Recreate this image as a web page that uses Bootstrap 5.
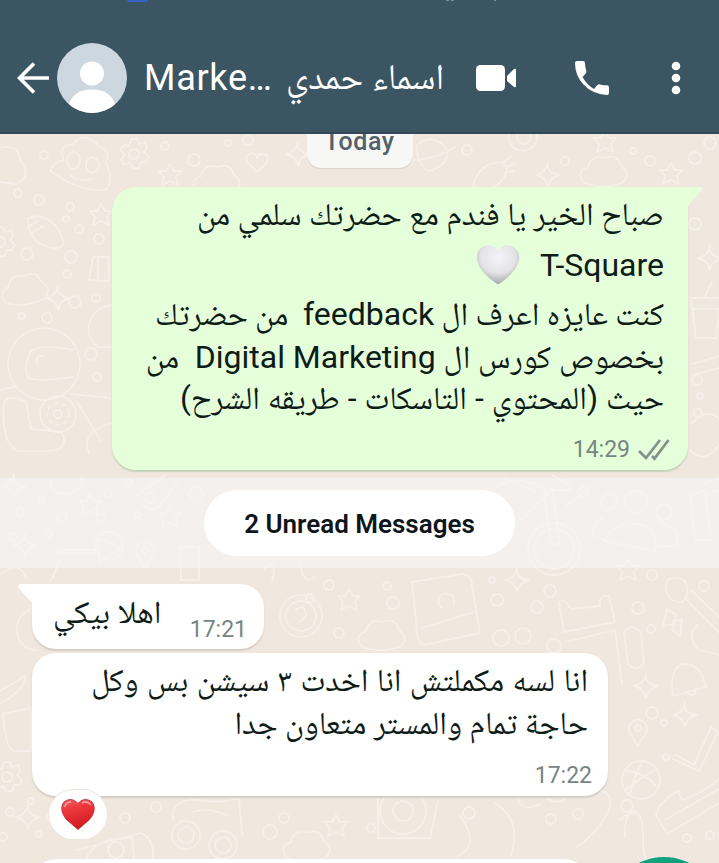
<!DOCTYPE html>
<html lang="en">
<head>
<meta charset="utf-8">
<meta name="viewport" content="width=device-width, initial-scale=1">
<title>Chat</title>
<link href="https://cdn.jsdelivr.net/npm/bootstrap@5.3.0/dist/css/bootstrap.min.css" rel="stylesheet">
<style>
body{width:719px;height:863px;overflow:hidden;background:#f0e7df;font-family:Roboto,"Noto Naskh Arabic","DejaVu Sans",sans-serif;color:#0e1b17}
svg{display:block;flex:none}
.topbar{height:134px;background:#3b5563;border-bottom:2px solid #31495a;padding:24px 38px 0 17px;z-index:3}
.contact{font-size:36px;color:#fff;line-height:50px;white-space:nowrap}
.contact-en{letter-spacing:.7px;width:143px;padding-left:1px}
.contact-ar{margin-top:-1px}
.phone{margin-left:58px}
.kebab{margin-left:61px}
.wallpaper{left:0;top:134px;z-index:0;fill:none;stroke:#f7f0ea;stroke-width:1.8;stroke-linejoin:round;stroke-linecap:round}
.chat{z-index:1;height:729px;overflow:hidden}
.day{width:106px;height:54px;margin-top:-20px;border-radius:14px;background:#f7f7f5;color:#52616a;font-size:25px;font-weight:500;letter-spacing:.6px;line-height:56px;box-shadow:0 1px 1px #d9d0c8}
.bubble{border-radius:24px;box-shadow:0 1.5px 1.5px #d3cdc4}
.bubble-out{width:576px;height:283px;margin:19px 31px 0 auto;padding:6px 24px 0 0;background:#e5ffdb;box-shadow:0 1.5px 1.5px #c3d2b4}
.tail{top:0}
.tail-out{right:-15px}
.tail-in{left:-14px}
.txt{font-size:32px;white-space:pre}
.l1{line-height:42px;word-spacing:-.6px}
.l2{line-height:60px}
.l3{line-height:38px;word-spacing:-.6px}
.l4{line-height:48px;word-spacing:-.1px}
.l5{line-height:34px}
.l6{line-height:43px}
.wide{word-spacing:.5px}
.tight{word-spacing:-.5px}
.wheart{margin-right:20px}
.out-meta{margin:20px -6px 0 0}
.in-stamp{margin:16px -4px 0 0}
.stamp{font-size:23px;line-height:30px;color:#76857f}
.unread{height:90px;margin-top:8px;background:rgba(246,246,245,.62)}
.unread-pill{width:311px;height:66px;padding-top:2px;background:#fff;border-radius:33px;font-size:26px;font-weight:600;color:#0f161b;white-space:nowrap}
.in-1{width:232px;height:65px;margin:16px 0 0 32px;padding:0 17px 0 21px;background:#fff}
.in-2{width:576px;height:143px;margin:4px 0 0 32px;padding:6px 20px 0 0;background:#fff}
.in-3{width:556px;height:60px;margin:63px 0 0 32px;background:#fff}
.reaction{left:17px;top:137px;width:58px;height:49px;border-radius:25px;background:#fff;box-shadow:0 0 0 1px #ece6e0}
.fab{left:608px;top:723px;width:112px;height:112px;background:#12a17e}
</style>
</head>
<body class="position-relative">
<svg class="wallpaper position-absolute" width="719" height="729" viewBox="0 134 719 729" aria-hidden="true">
<defs>
<path id="star" d="M0-11 4-4 11-4 6 2 8 10 0 6-8 10-6 2-11-4-4-4Z"/>
<path id="spark" d="M0-12Q-2-2 12 0 2 2 0 12-2 2-12 0-2-2 0-12Z"/>
<path id="cloud" d="M-19 12Q-28 1-15-4-12-17 2-13 14-18 18-5 29 3 19 12Q0 19-19 12Z"/>
<path id="gear" d="M-3-15H3L5-10 11-12 13-6 10-2 15 3 12 8 7 8 5 14-1 14-4 9-10 11-13 6-9 1-14-4-10-9-5-8ZM5 0A5 5 0 1 1-5 0 5 5 0 1 1 5 0"/>
<path id="rocket" d="M-24 10Q-18-14 6-14 13-5 6 3-5 18-24 10ZM6-14 14-20M9-9 18-12M8-3 17-5"/>
<path id="heart" d="M0 9-10-1Q-12-9-5-10 0-9 0-5 2-11 8-9 13-5 9 1Z"/>
<path id="pin" d="M0 15-8 2A9 9 0 1 1 8 2ZM3-3A3 3 0 1 1-3-3 3 3 0 1 1 3-3"/>
<path id="bell" d="M-16 16Q-20-14-5-16 12-16 17 7ZM-2 13Q6 18 7 9"/>
<path id="bolt" d="M-6-15 3-9 1-2 9-5 7 12-1 6 2 0-10 2Z"/>
<g id="bubbles"><circle r="4"/><circle cx="21" cy="-11" r="3"/><circle cx="42" cy="5" r="5"/><circle cx="29" cy="22" r="3"/><circle cx="-7" cy="25" r="4"/></g>
<path id="book" d="M-32-26 18-34Q28-33 28-22L36 25-20 37Q-27 34-27 24ZM-22 20 30 4M-2 0A8 8 0 1 1 10-4"/>
<path id="cup" d="M-15-20H15L10 20H-10ZM-13-9H13M-2-20 6-36"/>
</defs>
<path d="M0 148Q19 143 20 160 33 177 16 184L0 182M50 171Q56 159 64 161 58 144 72 145 84 130 99 146 112 151 106 163 114 180 106 190 79 192 50 171M67 161A6 8 0 1 0 80 160 6 8 0 1 0 67 161M86 165A6 7 0 1 0 99 165 6 7 0 1 0 86 165M71 176Q83 183 91 179"/>
<circle cx="44" cy="155" r="4"/><circle cx="18" cy="193" r="4"/><circle cx="39" cy="200" r="5"/><circle cx="70" cy="207" r="4"/><circle cx="27" cy="254" r="6"/><circle cx="71" cy="257" r="6"/><circle cx="67" cy="274" r="4"/><circle cx="75" cy="302" r="6"/><circle cx="96" cy="298" r="4"/><circle cx="47" cy="318" r="5"/><circle cx="91" cy="354" r="6"/><circle cx="97" cy="377" r="4"/><circle cx="99" cy="239" r="5"/><circle cx="22" cy="316" r="3"/><circle cx="66" cy="219" r="3"/><circle cx="79" cy="229" r="4"/>
<use href="#star" x="101" y="215"/><use href="#gear" x="0" y="242"/>
<path d="M27 219Q42 211 56 226 71 248 55 248 36 247 30 231ZM28 227 38 221M30 234 43 226"/>
<use href="#cloud" x="24" y="289" transform="rotate(-8 24 289)"/><use href="#spark" x="58" y="298"/>
<path d="M89 280 93 257H109V281ZM98 258V278M112 305Q99 306 91 318 84 336 98 347H112"/>
<circle cx="44" cy="364" r="36"/><path d="M73 350Q39 343 30 352 22 370 29 378 41 382 73 377M37 365Q35 354 44 356"/>
<circle cx="58" cy="414" r="18"/><circle cx="58" cy="414" r="4"/><circle cx="58" cy="414" r="11" stroke-dasharray="3 5"/>
<path d="M4 403Q8 393 26 402L31 429 62 432Q70 451 48 451H17Q1 442 4 403M71 394 110 398M77 402 101 441M0 390 18 386M112 423Q80 432 89 453"/>
<use href="#gear" x="134" y="154"/><use href="#cloud" x="216" y="180"/><use href="#star" x="170" y="175"/><use href="#heart" x="257" y="163"/><use href="#spark" x="298" y="154"/><circle cx="194" cy="160" r="6"/><circle cx="165" cy="146" r="4"/><circle cx="248" cy="140" r="5"/><circle cx="228" cy="143" r="3"/>
<path d="M417 145Q433 132 446 148 451 165 429 171 416 164 417 145M408 160Q434 161 455 147"/>
<circle cx="523" cy="137" r="14"/><circle cx="524" cy="137" r="7"/><use href="#rocket" x="497" y="176"/><use href="#spark" x="548" y="175"/><use href="#star" x="605" y="142"/><use href="#cloud" x="603" y="171"/><use href="#star" x="671" y="174"/><circle cx="650" cy="161" r="5"/><circle cx="695" cy="158" r="6"/><circle cx="710" cy="143" r="6"/><circle cx="565" cy="161" r="4"/><circle cx="467" cy="150" r="5"/><circle cx="633" cy="151" r="3"/>
<circle cx="695" cy="224" r="6"/><use href="#spark" x="710" y="258"/><use href="#cup" x="706" y="318"/><path d="M692 364 719 356M692 375 719 368M692 423Q707 407 719 419M690 450Q705 465 719 445"/><circle cx="697" cy="380" r="5"/><circle cx="700" cy="396" r="3"/><circle cx="698" cy="413" r="4"/>
<use href="#spark" x="14" y="486"/><path d="M50 482Q52 495 69 494 84 488 82 477M136 496 165 475M142 503Q152 515 161 504L178 482M59 550H98V538L122 548 99 562V553H59Z"/><circle cx="109" cy="546" r="14"/>
<use href="#star" x="90" y="505"/><use href="#star" x="170" y="517"/><use href="#spark" x="25" y="545"/><use href="#pin" x="145" y="553"/><use href="#bubbles" x="20" y="512"/><use href="#bubbles" x="108" y="493"/><circle cx="196" cy="494" r="7"/><path d="M0 575Q19 559 26 578M60 560 51 581M180 547H199V580H181ZM264 569Q278 556 272 582M300 563Q304 588 315 576"/>
<path d="M494 488Q522 471 549 493L520 521M505 478 535 491M552 475 570 485V490H550"/><circle cx="554" cy="549" r="26"/><circle cx="554" cy="549" r="20"/><path d="M544 490 551 545 560 543 552 488M565 507 592 486"/>
<circle cx="583" cy="492" r="5"/><circle cx="609" cy="502" r="8"/><circle cx="636" cy="502" r="11"/><circle cx="664" cy="512" r="8"/><path d="M604 541Q616 520 637 524 656 524 656 551ZM604 517Q594 523 592 535L603 539M658 520 677 532V546H659M690 495 705 490 711 540H695ZM705 484 719 478M707 494 719 490"/>
<use href="#book" x="444" y="608"/><use href="#cloud" x="381" y="635"/><use href="#spark" x="517" y="580"/><circle cx="550" cy="591" r="6"/><circle cx="497" cy="600" r="6"/><circle cx="537" cy="607" r="6"/><circle cx="393" cy="603" r="6"/><circle cx="387" cy="586" r="4"/><circle cx="492" cy="580" r="3"/>
<path d="M559 603Q563 596 571 609L600 606Q599 594 609 596L615 622 564 632ZM566 642 615 630 622 684M624 632Q632 622 641 633L644 663Q637 673 628 664Z"/><circle cx="638" cy="608" r="6"/><circle cx="554" cy="646" r="7"/><circle cx="501" cy="638" r="8"/><circle cx="523" cy="636" r="8"/>
<use href="#star" x="628" y="570"/><circle cx="652" cy="575" r="5"/><circle cx="651" cy="629" r="4"/><path d="M666 585Q668 574 684 580 692 593 682 602 665 602 666 585M685 598 719 632M691 590 719 617M697 625Q686 638 699 650L719 655"/><use href="#bolt" x="673" y="624"/><circle cx="704" cy="586" r="5"/>
<use href="#bell" x="689" y="680"/><use href="#spark" x="646" y="686"/><use href="#spark" x="685" y="715"/><use href="#pin" x="638" y="731"/><circle cx="652" cy="713" r="6"/><circle cx="664" cy="723" r="3"/><circle cx="666" cy="757" r="3"/>
<path d="M676 755 694 765 711 727 718 732 699 771 673 759M678 791Q657 804 656 815L667 834 719 803M678 791 682 800Q701 794 719 779M665 820 719 789"/><circle cx="641" cy="780" r="19"/><path d="M625 770Q646 773 658 788M643 761Q633 777 630 795M625 790Q642 777 657 769"/><circle cx="627" cy="806" r="6"/>
<path d="M599 790Q617 794 606 816 595 835 577 847M620 820Q643 799 643 836T654 857M625 837Q624 810 636 811"/>
<use href="#star" x="349" y="600"/><circle cx="301" cy="616" r="21"/><circle cx="301" cy="616" r="15"/><path d="M296 610Q305 603 306 615L300 622"/><circle cx="329" cy="585" r="5"/><circle cx="310" cy="598" r="4"/><circle cx="339" cy="633" r="5"/><path d="M32 608Q13 617 18 637 23 650 36 650"/>
<path d="M0 691 25 676Q26 689 0 704M3 714 31 708V751H14Q6 750 3 714"/><use href="#gear" x="7" y="777"/><use href="#spark" x="28" y="817"/><use href="#bubbles" x="10" y="812"/><circle cx="125" cy="818" r="5"/><circle cx="156" cy="807" r="5"/>
<path d="M173 819Q171 799 197 800 221 804 239 798L242 834M192 812Q210 807 227 815M77 850 140 833Q154 837 153 858M85 863Q90 843 112 840L132 837 134 858"/><circle cx="186" cy="835" r="14"/><circle cx="186" cy="835" r="8"/><circle cx="223" cy="845" r="14"/><circle cx="223" cy="845" r="8"/><circle cx="116" cy="850" r="8"/>
<use href="#star" x="336" y="826"/><use href="#cloud" x="306" y="846"/><circle cx="270" cy="832" r="7"/><circle cx="284" cy="818" r="5"/><circle cx="403" cy="811" r="23"/><circle cx="403" cy="811" r="10"/><path d="M378 797V838H430L438 801M456 857Q482 846 460 816M495 803Q522 819 511 855"/><circle cx="469" cy="813" r="6"/><circle cx="371" cy="828" r="4"/><path d="M517 798Q523 813 540 804M547 798Q558 806 566 797"/><circle cx="551" cy="819" r="5"/><circle cx="578" cy="814" r="5"/><circle cx="687" cy="838" r="4"/><circle cx="710" cy="835" r="4"/>
</svg>

<nav class="topbar position-relative d-flex align-items-center">
  <svg class="position-absolute top-0 start-0" width="719" height="4" aria-hidden="true"><rect x="127" y="-4" width="21" height="6" rx="2" fill="#3962c8"/><path d="M446 0h3M451 0h3M494 0h2" stroke="#b8c6cd"/></svg>
  <svg width="32" height="34" viewBox="0 0 32 34" fill="none" stroke="#fff" stroke-width="3.7"><path d="M32 17H3M17 2.500 2.500 17 17 31.500"/></svg>
  <svg class="ms-2" width="70" height="70" viewBox="0 0 70 70"><defs><clipPath id="face"><circle cx="35" cy="35" r="35"/></clipPath></defs><circle cx="35" cy="35" r="35" fill="#cdd7e0"/><g fill="#fff" clip-path="url(#face)"><circle cx="35" cy="30.500" r="12"/><path d="M12 61Q17 46.500 35 46.500T58 61V72H12Z"/></g></svg>
  <div class="contact d-flex ms-3"><span class="contact-en">Marke…</span><span class="contact-ar" dir="rtl">اسماء حمدي</span></div>
  <div class="d-flex align-items-center ms-auto">
    <svg width="40" height="28" viewBox="0 0 40 28" fill="#fff"><rect y="1" width="29" height="26" rx="4.500"/><path d="M31 12 38 5Q40 4 40 6V22Q40 24 38 23L31 17Z"/></svg>
    <svg class="phone" width="36" height="36" viewBox="0 0 36 36" fill="#fff"><path d="M3 1H9Q11 1 11 3 11 7 12.300 11 12.700 12.500 11.500 13.700L8.500 17Q13 25 20 29L23.200 25.200Q24.300 24 26 24.400 29 25.200 33 25.300 35 25.400 35 27.500V33Q35 35 33 35 18 34 9.500 24.500 1 15.500 1 3 1 1 3 1Z"/></svg>
    <svg class="kebab" width="10" height="34" viewBox="0 0 10 34" fill="#fff"><circle cx="5" cy="5" r="4.300"/><circle cx="5" cy="17" r="4.300"/><circle cx="5" cy="29" r="4.300"/></svg>
  </div>
</nav>

<main class="chat position-relative d-flex flex-column">
  <div class="day text-center mx-auto flex-shrink-0">Today</div>

  <section class="bubble bubble-out position-relative flex-shrink-0">
    <svg class="tail tail-out position-absolute" width="40" height="28" viewBox="0 0 40 28"><path d="M0 0H37Q41 1 38 4L25 19V28H0Z" fill="#e5ffdb"/></svg>
    <div class="position-relative" dir="rtl">
      <div class="txt l1">صباح الخير يا فندم مع حضرتك سلمي من</div>
      <div class="txt l2 d-flex align-items-center"><span>T-Square</span><svg class="wheart" width="44" height="40" viewBox="0 0 44 40"><defs><radialGradient id="wh" cx=".5" cy=".3" r=".68"><stop offset="0" stop-color="#f4f4f6"/><stop offset=".6" stop-color="#e4e4e7"/><stop offset="1" stop-color="#a9aaae"/></radialGradient></defs><path d="M22 5C27-1 35-1 40 4 46 11 43 20 36 28Q30 35 22 39.500 14 35 8 28C1 20-2 11 4 4 9-1 17-1 22 5Z" fill="url(#wh)"/></svg></div>
      <div class="txt l3">كنت عايزه اعرف ال feedback  من حضرتك</div>
      <div class="txt l4">بخصوص كورس ال Digital Marketing  من</div>
      <div class="txt l5">حيث (المحتوي - التاسكات - طريقه الشرح)</div>
    </div>
    <div class="out-meta d-flex justify-content-end align-items-center position-relative"><span class="stamp">14:29</span><svg class="ms-2" width="32" height="22" viewBox="0 0 32 22" fill="none" stroke="#84928c" stroke-width="2.800"><path d="M1 12 8 19 22 1M14 17 16.500 19.500 30.500 1"/></svg></div>
  </section>

  <section class="unread d-flex justify-content-center align-items-center flex-shrink-0"><div class="unread-pill d-flex justify-content-center align-items-center">2 Unread Messages</div></section>

  <section class="bubble in-1 position-relative d-flex justify-content-between flex-shrink-0">
    <svg class="tail tail-in position-absolute" width="40" height="28" viewBox="0 0 40 28"><path d="M40 0H2Q-1 1 1 4 8 13 14 18V28H40Z" fill="#fff"/></svg>
    <span class="txt position-relative pt-1" dir="rtl">اهلا بيكي</span><span class="stamp align-self-end pb-1">17:21</span>
  </section>

  <section class="bubble in-2 position-relative flex-shrink-0">
    <div class="txt l6 wide" dir="rtl">انا لسه مكملتش انا اخدت ٣ سيشن بس وكل</div>
    <div class="txt l6 tight" dir="rtl">حاجة تمام والمستر متعاون جدا</div>
    <div class="stamp text-end in-stamp">17:22</div>
    <div class="reaction position-absolute d-flex justify-content-center align-items-center">
      <svg width="34" height="31" viewBox="0 0 34 31"><defs><linearGradient id="rh" x2=".3" y2="1"><stop stop-color="#f0646a"/><stop offset=".35" stop-color="#ee3a3e"/><stop offset="1" stop-color="#d2191f"/></linearGradient></defs><path d="M17 4.500C21-.5 27-.5 31 3 35 8 33.500 15 28 21L17 30.500 6 21C.5 15-1 8 3 3 7-.5 13-.5 17 4.500Z" fill="url(#rh)" stroke="#b9262b" stroke-width=".8"/><path d="M3.500 8Q5 3 10 3M21 4Q26 1 30 6" stroke="#f6a0a0" stroke-width="1.500" fill="none"/></svg>
    </div>
  </section>

  <section class="bubble in-3 flex-shrink-0"></section>
  <div class="fab rounded-circle position-absolute"></div>
</main>
<script src="https://cdn.jsdelivr.net/npm/bootstrap@5.3.0/dist/js/bootstrap.bundle.min.js"></script>
</body>
</html>
